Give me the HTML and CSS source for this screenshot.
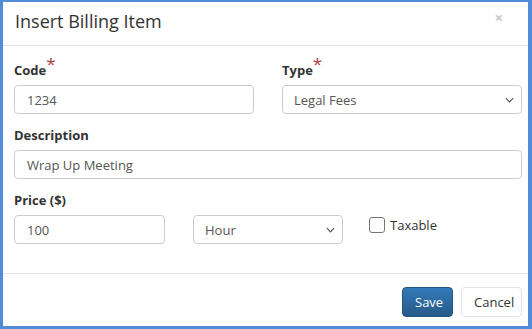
FILE: index.html
```html
<!DOCTYPE html>
<html>
<head>
<meta charset="utf-8">
<link rel="stylesheet" href="styles.css">
</head>
<body>
<div class="dialog">
  <div class="header">
    <h4 class="title">Insert Billing Item</h4>
    <span class="close">&times;</span>
  </div>
  <div class="body">
    <div class="row two">
      <div class="group">
        <label class="lbl">Code<span class="req">*</span></label>
        <div class="input">1234</div>
      </div>
      <div class="group">
        <label class="lbl">Type<span class="req">*</span></label>
        <div class="input select">Legal Fees<svg class="chev" viewBox="0 0 10 6" width="9" height="6"><path d="M1 1l4 4 4-4" fill="none" stroke="#555" stroke-width="1.3"/></svg></div>
      </div>
    </div>
    <div class="group">
      <label class="lbl">Description</label>
      <div class="input">Wrap Up Meeting</div>
    </div>
    <div class="row three">
      <div class="group">
        <label class="lbl">Price ($)</label>
        <div class="input">100</div>
      </div>
      <div class="group">
        <label class="lbl">&nbsp;</label>
        <div class="input select">Hour<svg class="chev" viewBox="0 0 10 6" width="9" height="6"><path d="M1 1l4 4 4-4" fill="none" stroke="#555" stroke-width="1.3"/></svg></div>
      </div>
      <div class="group">
        <label class="lbl">&nbsp;</label>
        <div class="check"><span class="box"></span><span class="ctext">Taxable</span></div>
      </div>
    </div>
  </div>
  <div class="footer">
    <button class="btn primary">Save</button>
    <button class="btn default">Cancel</button>
  </div>
</div>
</body>
</html>
```
FILE: styles.css
```css
html, body { margin: 0; padding: 0; }
body {
  width: 532px;
  height: 329px;
  background: #518cd8;
  font-family: "Open Sans", "Noto Sans", sans-serif;
  color: #333;
  box-sizing: border-box;
  padding: 2px 4px 3px 3px;
}
.dialog {
  background: #fff;
  height: 324px;
  display: flex;
  flex-direction: column;
}
.header {
  height: 43px;
  border-bottom: 1px solid #e5e5e5;
  display: flex;
  align-items: center;
  justify-content: space-between;
  padding: 0 25px 0 12px;
}
.title {
  margin: 0;
  font-size: 18px;
  font-weight: 400;
  color: #333;
  line-height: 20px;
  margin-top: -5px;
}
.close {
  font-size: 15px;
  font-weight: 700;
  color: #c8c8c8;
  line-height: 1;
  margin-top: -13px;
}
.body {
  padding: 13px 6px 0 11px;
  flex: 1;
}
.row { display: grid; column-gap: 28px; }
.two { grid-template-columns: 1fr 1fr; }
.three { grid-template-columns: 151px 150px 1fr; column-gap: 28px; }
.group { margin-bottom: 12px; }
.lbl {
  display: block;
  font-size: 13px;
  font-weight: 700;
  line-height: 19px;
  margin-bottom: 5px;
  color: #333;
}
.req {
  color: #b03a3a;
  font-size: 17px;
  position: relative;
  top: -5px;
  font-weight: 400;
}
.input {
  height: 29px;
  box-sizing: border-box;
  border: 1px solid #ccc;
  border-radius: 4px;
  padding: 0 12px;
  font-size: 13px;
  color: #555;
  display: flex;
  align-items: center;
  justify-content: space-between;
}
.select { padding-right: 7px; padding-left: 11px; }
.chev { margin-top: 1px; }
.check {
  display: flex;
  align-items: center;
  height: 20px;
  margin-top: 0;
  margin-left: -2px;
  font-size: 13px;
  color: #333;
}
.box {
  width: 14px;
  height: 14px;
  border: 1px solid #767676;
  border-radius: 3px;
  margin-right: 5px;
}
.footer {
  border-top: 1px solid #e5e5e5;
  display: flex;
  justify-content: flex-end;
  gap: 8px;
  padding: 13px 6px 9px 0;
}
.btn {
  font-family: "Open Sans", "Noto Sans", sans-serif;
  font-size: 13px;
  height: 30px;
  border-radius: 4px;
  padding: 0 12px;
  cursor: pointer;
}
.primary {
  width: 51px;
  color: #fff;
  background: linear-gradient(#3479b8, #265a88);
  border: 1px solid #245580;
}
.default {
  width: 61px;
  color: #333;
  background: #fff;
  border: 1px solid #e2e2e2;
}
```
